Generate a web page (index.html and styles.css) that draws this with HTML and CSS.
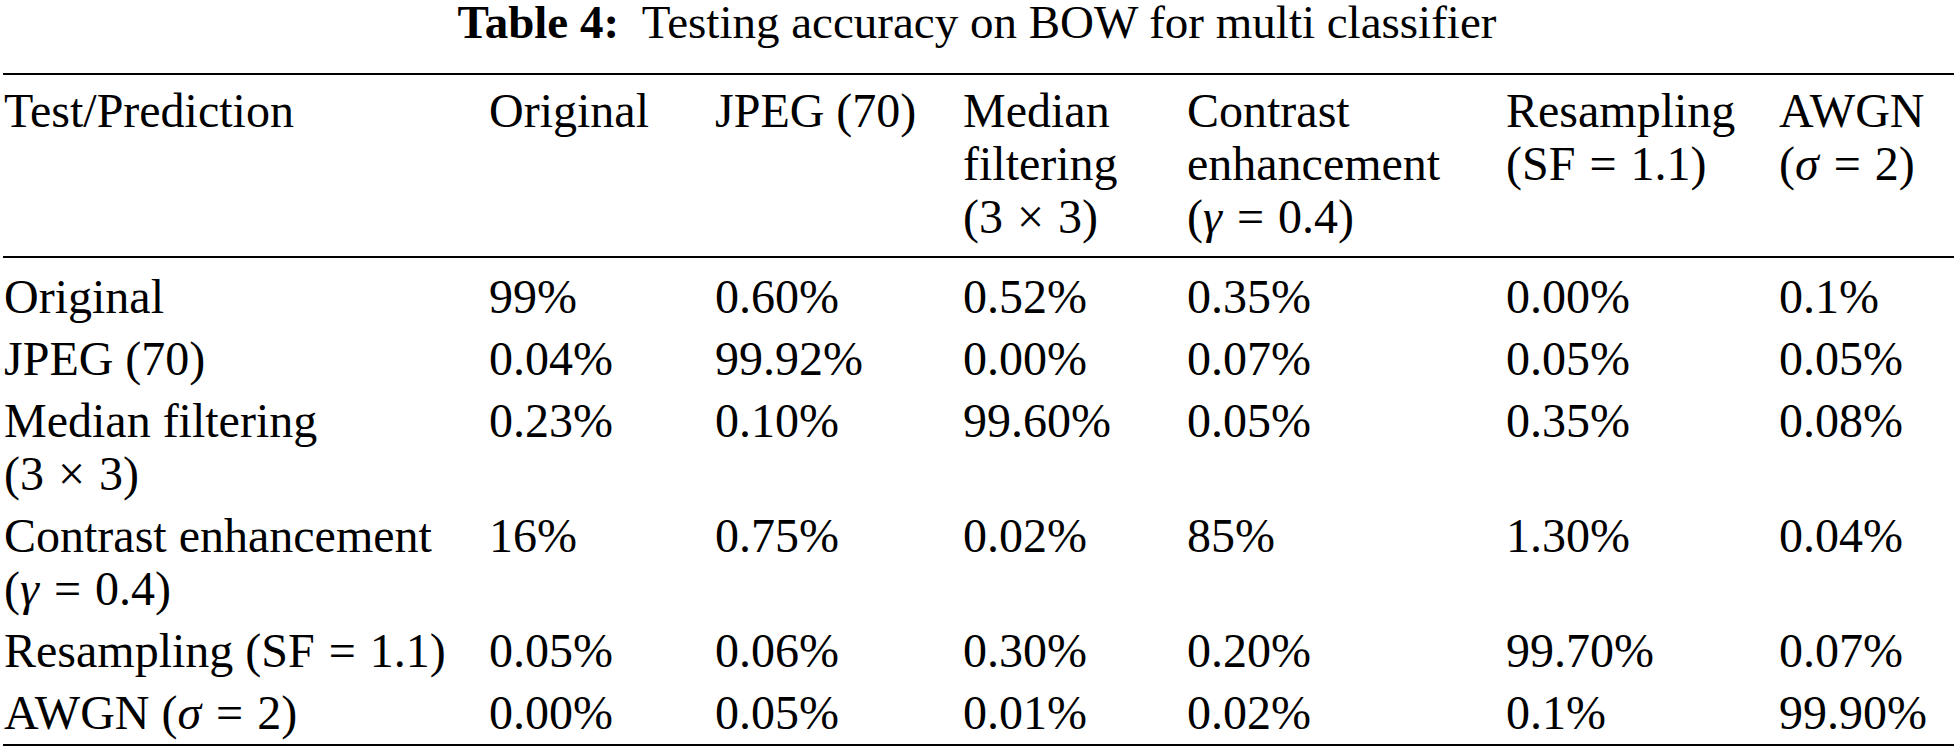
FILE: index.html
```html
<!DOCTYPE html>
<html>
<head>
<meta charset="utf-8">
<link rel="stylesheet" href="styles.css">
</head>
<body>
<div class="page">
  <div class="caption"><b>Table 4:</b>&nbsp; Testing accuracy on BOW for multi classifier</div>
  <table class="tbl">
    <colgroup>
      <col class="c1"><col class="c2"><col class="c3"><col class="c4"><col class="c5"><col class="c6"><col class="c7">
    </colgroup>
    <thead>
      <tr>
        <th>Test/Prediction</th>
        <th>Original</th>
        <th>JPEG (70)</th>
        <th>Median<br>filtering<br>(3<span class="op">×</span>3)</th>
        <th>Contrast<br>enhancement<br>(<i class="mi">γ</i><span class="op">=</span>0.4)</th>
        <th>Resampling<br>(SF<span class="op">=</span>1.1)</th>
        <th>AWGN<br>(<i class="mi">σ</i><span class="op">=</span>2)</th>
      </tr>
    </thead>
    <tbody>
      <tr><td>Original</td><td>99%</td><td>0.60%</td><td>0.52%</td><td>0.35%</td><td>0.00%</td><td>0.1%</td></tr>
      <tr><td>JPEG (70)</td><td>0.04%</td><td>99.92%</td><td>0.00%</td><td>0.07%</td><td>0.05%</td><td>0.05%</td></tr>
      <tr><td>Median filtering<br>(3<span class="op">×</span>3)</td><td>0.23%</td><td>0.10%</td><td>99.60%</td><td>0.05%</td><td>0.35%</td><td>0.08%</td></tr>
      <tr><td>Contrast enhancement<br>(<i class="mi">γ</i><span class="op">=</span>0.4)</td><td>16%</td><td>0.75%</td><td>0.02%</td><td>85%</td><td>1.30%</td><td>0.04%</td></tr>
      <tr><td>Resampling (SF<span class="op">=</span>1.1)</td><td>0.05%</td><td>0.06%</td><td>0.30%</td><td>0.20%</td><td>99.70%</td><td>0.07%</td></tr>
      <tr><td>AWGN (<i class="mi">σ</i><span class="op">=</span>2)</td><td>0.00%</td><td>0.05%</td><td>0.01%</td><td>0.02%</td><td>0.1%</td><td>99.90%</td></tr>
    </tbody>
  </table>
</div>
</body>
</html>
```
FILE: styles.css
```css
html, body {
  margin: 0;
  padding: 0;
  background: #ffffff;
}
.page {
  font-family: "Liberation Serif", "Times New Roman", Tinos, Times, serif;
  font-size: 47px;
  color: #000;
  width: 1954px;
}
.caption {
  text-align: center;
  line-height: 44px;
  height: 73px;
}
.caption b {
  font-weight: bold;
}
.tbl {
  margin-left: 3px;
  width: 1951px;
  border-collapse: collapse;
  table-layout: fixed;
  font-size: 48px;
  line-height: 53px;
}
.c1 { width: 485px; }
.c2 { width: 226px; }
.c3 { width: 248px; }
.c4 { width: 224px; }
.c5 { width: 319px; }
.c6 { width: 273px; }
.c7 { width: 176px; }
.tbl th, .tbl td {
  text-align: left;
  vertical-align: top;
  font-weight: normal;
  padding: 4px 0 5px 1px;
  white-space: nowrap;
}
.tbl thead tr {
  border-top: 2px solid #000;
  border-bottom: 2px solid #000;
}
.tbl thead th {
  padding-top: 9px;
  padding-bottom: 13px;
}
.tbl tbody tr:first-child td {
  padding-top: 12px;
}
.tbl tbody tr:last-child {
  border-bottom: 2px solid #000;
}
.op {
  display: inline-block;
  margin: 0 14px;
}
.mi {
  font-style: italic;
  margin-right: 1px;
}
```
